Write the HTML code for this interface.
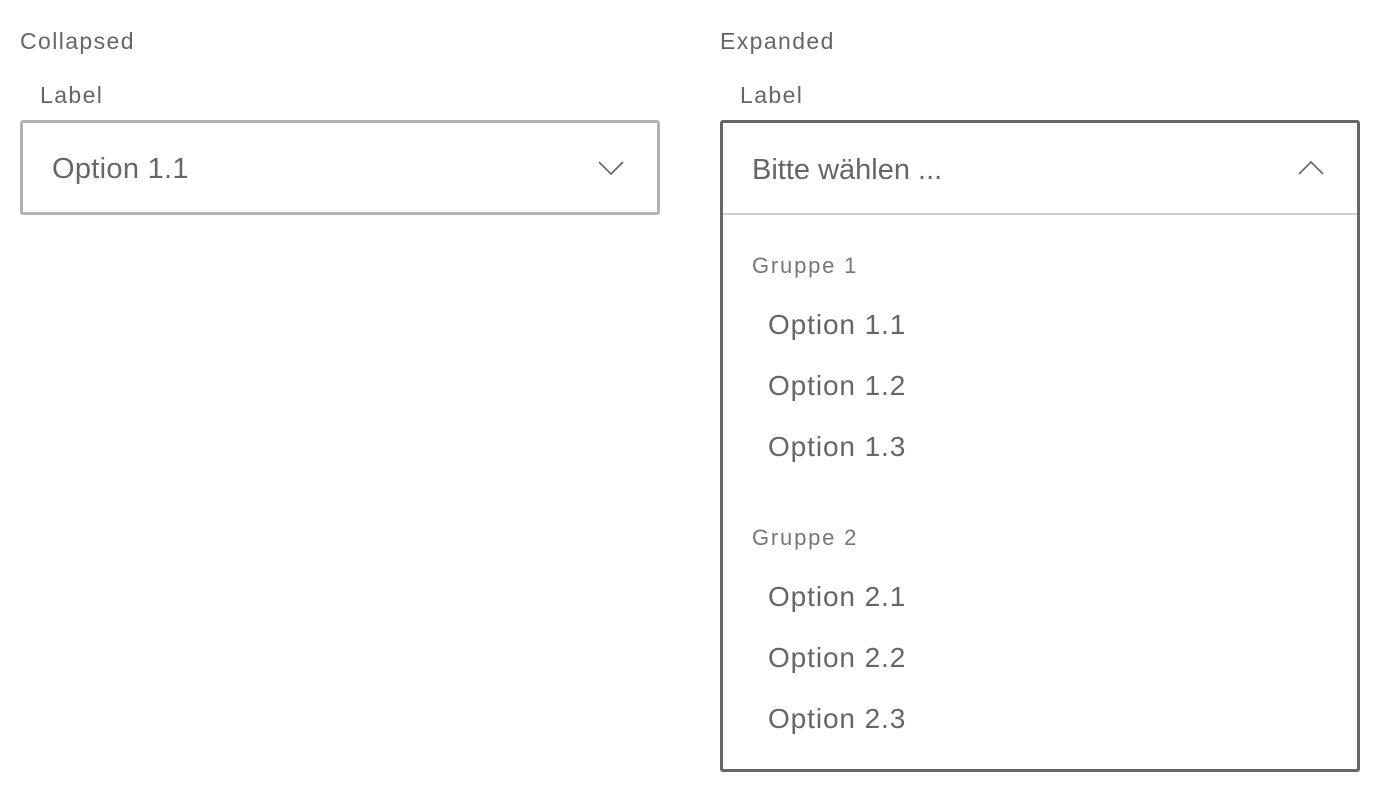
<!DOCTYPE html>
<html><head><meta charset="utf-8"><style>
body{margin:0;width:1380px;height:792px;background:#fff;position:relative;font-family:"Liberation Sans",Arial,sans-serif;color:#666;overflow:hidden}
.t{position:absolute;line-height:1;white-space:nowrap}
.h{font-size:23px;letter-spacing:1.4px}
.o{font-size:28px;letter-spacing:0.9px}
.g{font-size:22px;color:#777;letter-spacing:1.8px}
.box{position:absolute;box-sizing:border-box;border-radius:3px}
</style></head><body>
<div class="t h" style="left:20px;top:30px">Collapsed</div>
<div class="t h" style="left:720px;top:30px">Expanded</div>
<div class="t h" style="left:40px;top:84px">Label</div>
<div class="t h" style="left:740px;top:84px">Label</div>

<div class="box" style="left:20px;top:120px;width:640px;height:95px;border:3px solid #b3b3b3"></div>
<div class="t" style="left:52px;top:155px;font-size:29px;letter-spacing:0.3px">Option 1.1</div>
<svg style="position:absolute;left:596px;top:158px" width="32" height="20"><path d="M3 4 L15 16 L27 4" fill="none" stroke="#666" stroke-width="1.6"/></svg>

<div class="box" style="left:720px;top:120px;width:640px;height:652px;border:3px solid #666"></div>
<div style="position:absolute;left:723px;top:213px;width:634px;height:2px;background:#ccc"></div>
<div class="t" style="left:752px;top:156px;font-size:29px">Bitte wählen ...</div>
<svg style="position:absolute;left:1296px;top:158px" width="32" height="20"><path d="M3 16 L15 4 L27 16" fill="none" stroke="#666" stroke-width="1.6"/></svg>

<div class="t g" style="left:752px;top:255px">Gruppe 1</div>
<div class="t o" style="left:768px;top:311px">Option 1.1</div>
<div class="t o" style="left:768px;top:372px">Option 1.2</div>
<div class="t o" style="left:768px;top:433px">Option 1.3</div>
<div class="t g" style="left:752px;top:527px">Gruppe 2</div>
<div class="t o" style="left:768px;top:583px">Option 2.1</div>
<div class="t o" style="left:768px;top:644px">Option 2.2</div>
<div class="t o" style="left:768px;top:705px">Option 2.3</div>
</body></html>
